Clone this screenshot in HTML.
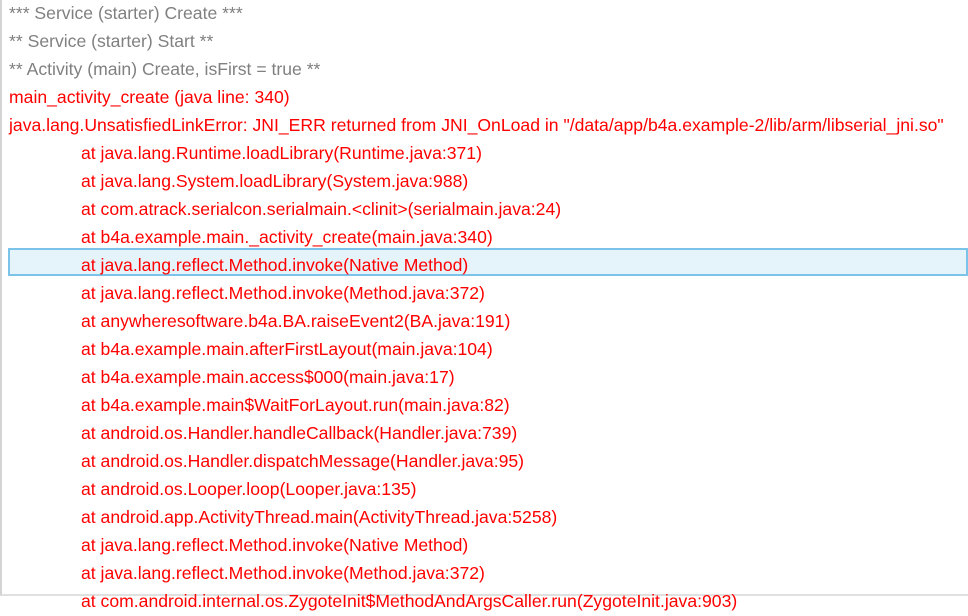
<!DOCTYPE html>
<html><head><style>
html,body{margin:0;width:968px;height:596px;overflow:hidden;background:#fff;font-family:"Liberation Sans",sans-serif;font-size:17.6px;}
.box{position:absolute;left:0;top:0;width:966px;height:594px;border-left:2px solid #d4d4d4;border-bottom:2px solid #e0e0e0;}
.l{position:absolute;left:9px;height:28px;line-height:26px;white-space:nowrap;color:#ff0000;}
.g{color:#808080;}
.i{left:81px;}
.hl{position:absolute;left:8px;top:248px;width:956px;height:24px;background:#e5f3fb;border:2px solid #7cc3ea;}
</style></head><body>
<div class="box"></div>
<div class="hl"></div>
<div class="l g" style="top:0px">*** Service (starter) Create ***</div>
<div class="l g" style="top:28px">** Service (starter) Start **</div>
<div class="l g" style="top:56px">** Activity (main) Create, isFirst = true **</div>
<div class="l" style="top:84px">main_activity_create (java line: 340)</div>
<div class="l" style="top:112px">java.lang.UnsatisfiedLinkError: JNI_ERR returned from JNI_OnLoad in "/data/app/b4a.example-2/lib/arm/libserial_jni.so"</div>
<div class="l i" style="top:140px">at java.lang.Runtime.loadLibrary(Runtime.java:371)</div>
<div class="l i" style="top:168px">at java.lang.System.loadLibrary(System.java:988)</div>
<div class="l i" style="top:196px">at com.atrack.serialcon.serialmain.&lt;clinit&gt;(serialmain.java:24)</div>
<div class="l i" style="top:224px">at b4a.example.main._activity_create(main.java:340)</div>
<div class="l i" style="top:252px">at java.lang.reflect.Method.invoke(Native Method)</div>
<div class="l i" style="top:280px">at java.lang.reflect.Method.invoke(Method.java:372)</div>
<div class="l i" style="top:308px">at anywheresoftware.b4a.BA.raiseEvent2(BA.java:191)</div>
<div class="l i" style="top:336px">at b4a.example.main.afterFirstLayout(main.java:104)</div>
<div class="l i" style="top:364px">at b4a.example.main.access$000(main.java:17)</div>
<div class="l i" style="top:392px">at b4a.example.main$WaitForLayout.run(main.java:82)</div>
<div class="l i" style="top:420px">at android.os.Handler.handleCallback(Handler.java:739)</div>
<div class="l i" style="top:448px">at android.os.Handler.dispatchMessage(Handler.java:95)</div>
<div class="l i" style="top:476px">at android.os.Looper.loop(Looper.java:135)</div>
<div class="l i" style="top:504px">at android.app.ActivityThread.main(ActivityThread.java:5258)</div>
<div class="l i" style="top:532px">at java.lang.reflect.Method.invoke(Native Method)</div>
<div class="l i" style="top:560px">at java.lang.reflect.Method.invoke(Method.java:372)</div>
<div class="l i" style="top:588px">at com.android.internal.os.ZygoteInit$MethodAndArgsCaller.run(ZygoteInit.java:903)</div>
</body></html>
